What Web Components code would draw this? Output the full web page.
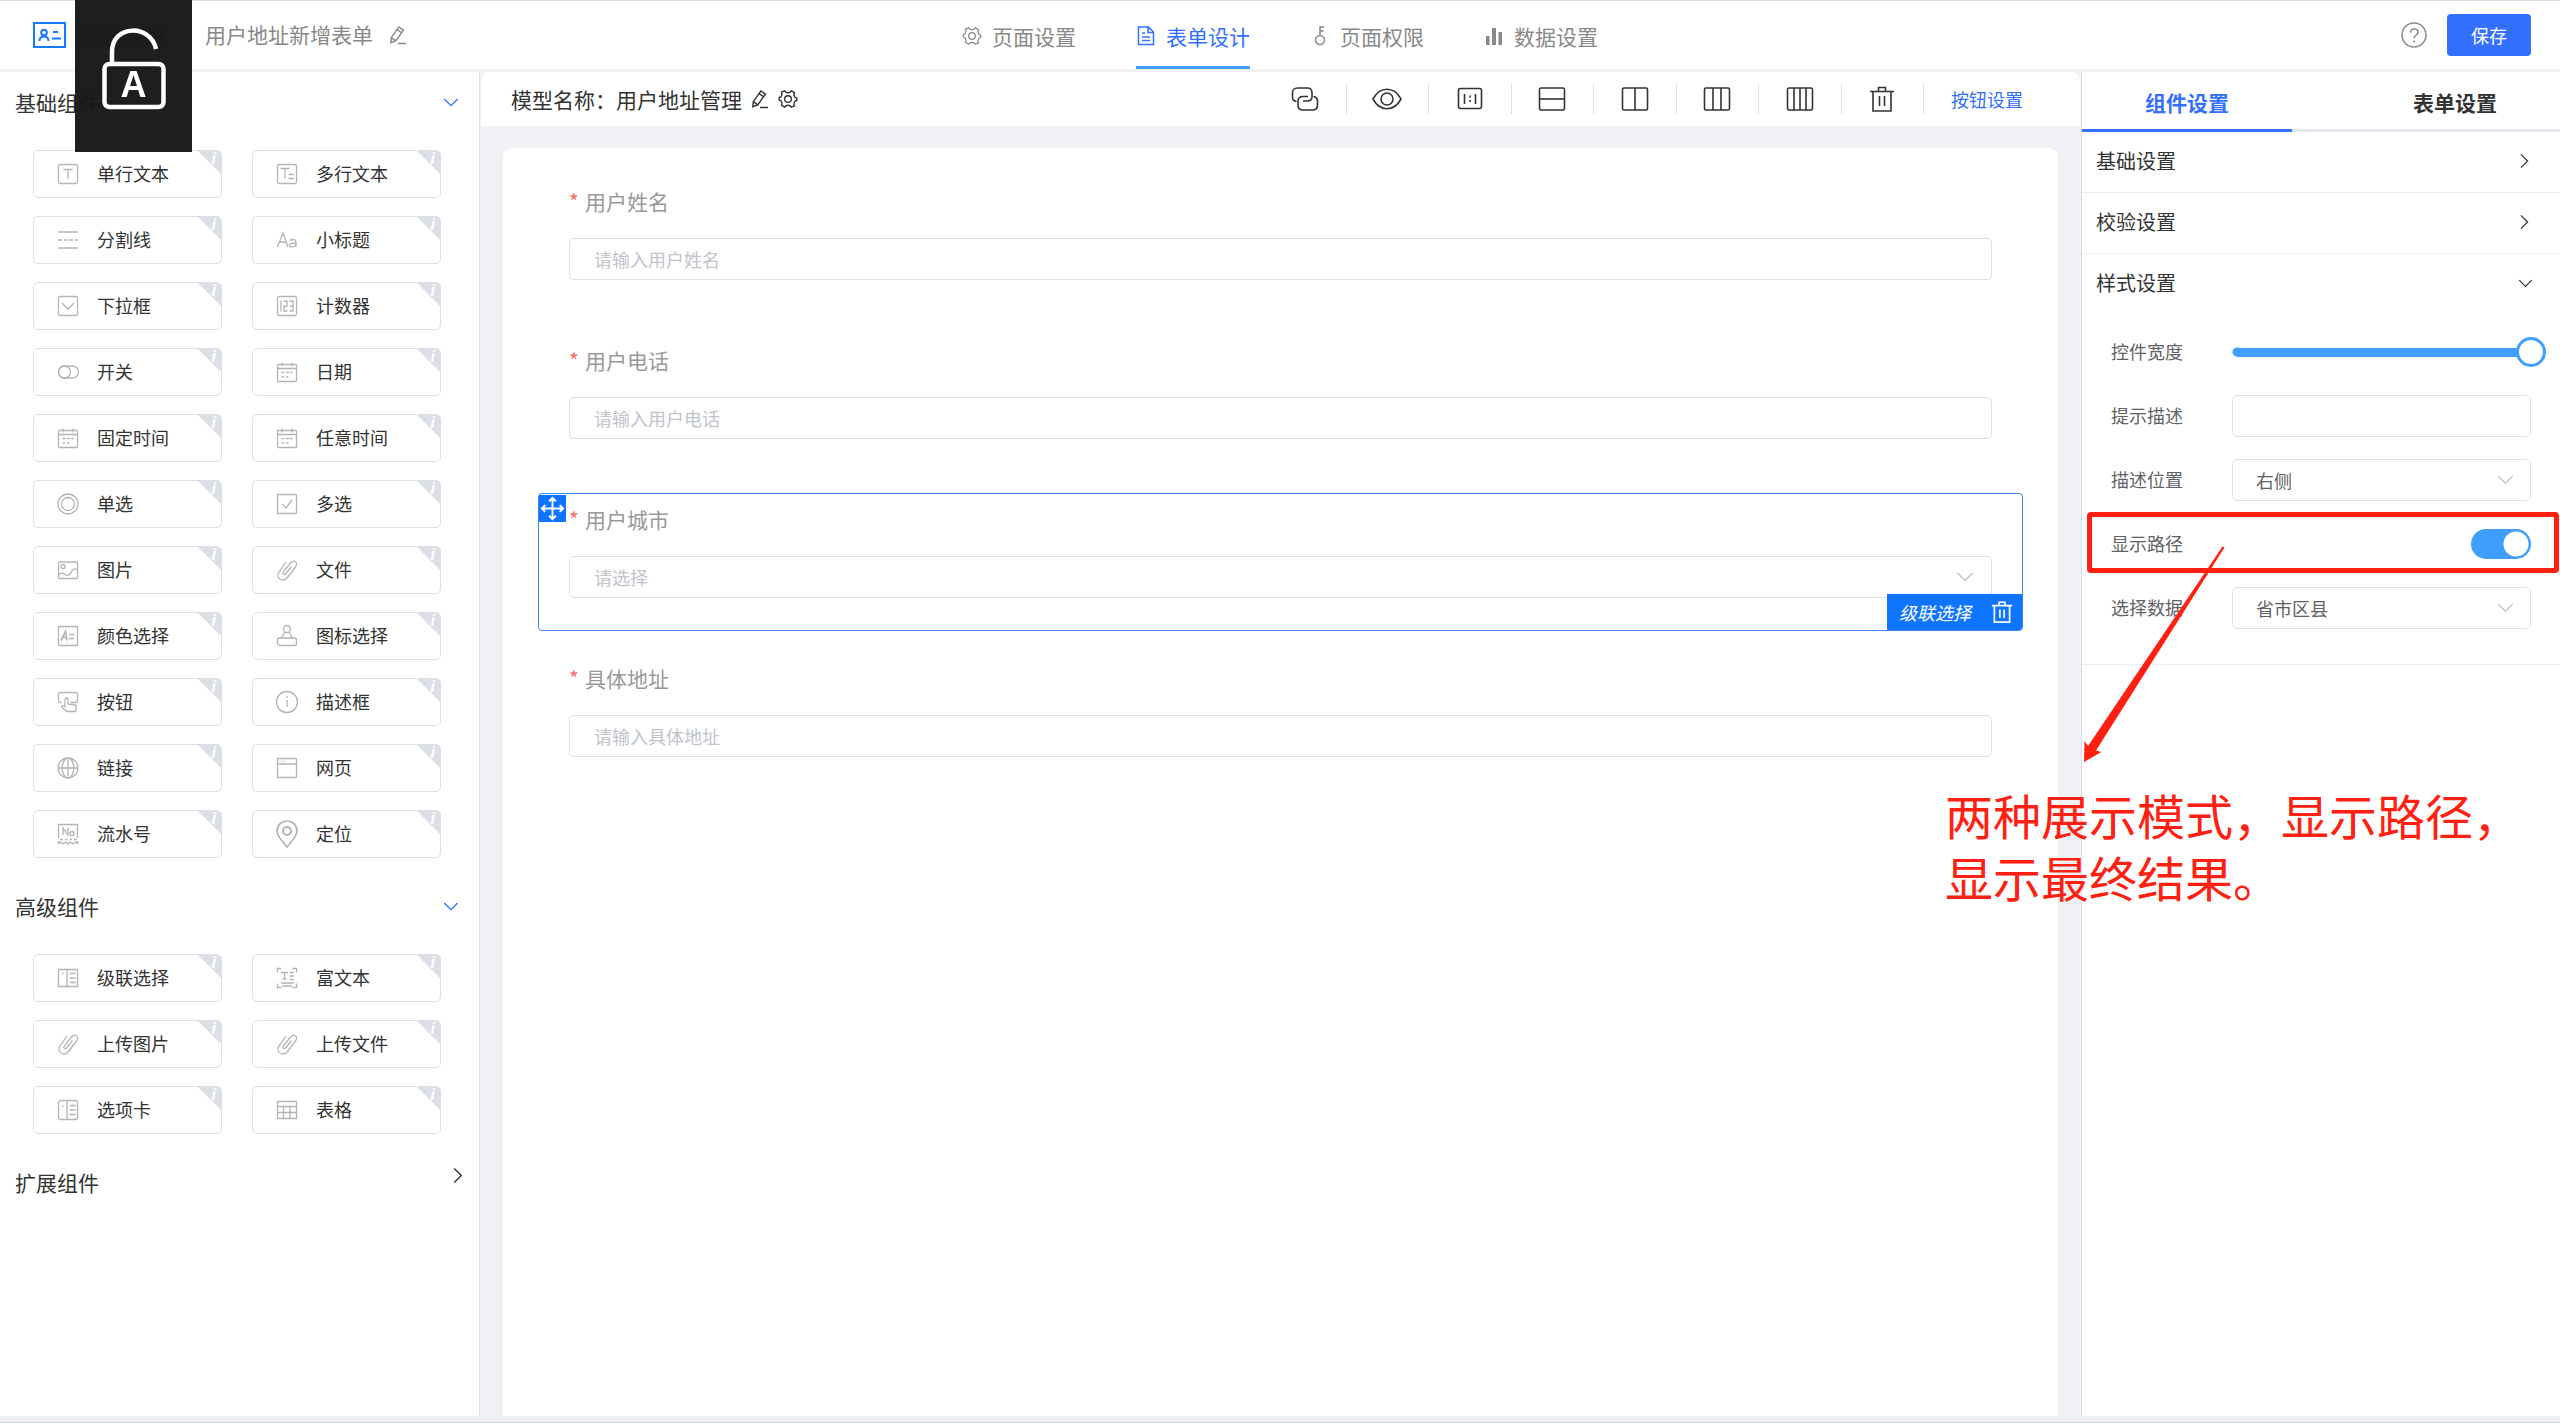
<!DOCTYPE html>
<html lang="zh-CN">
<head>
<meta charset="utf-8">
<title>用户地址新增表单</title>
<style>
html,body{margin:0;height:100%}
body{font-family:"Noto Sans CJK SC","Noto Sans",sans-serif;font-size:18px;color:#333;background:#eff1f4}
</style>
</head>
<body>
<form-designer></form-designer>
<script>
const ICONS = {
  logo:['0 0 33 26','<rect x="1" y="1" width="31" height="24" fill="none" stroke="#1677ff" stroke-width="2"/><g fill="none" stroke="#1677ff" stroke-width="2"><circle cx="11" cy="10.500" r="2.800"/><path d="M6.500 19c0-3 2-4.500 4.500-4.500s4.500 1.500 4.500 4.500M20 10h5M19 16.500h9"/></g>'],
  pencil:['0 0 20 22','<path d="M2 19.500 2.600 14 11 2l5 3.500L7.500 17.500zM9 5l5 3.500M2.600 14l5 3.500M10 20.500h9"/>'],
  gear:['0 0 24 24','<path d="M8 2.200c.8 1.600 2.200 2.300 4 2.300s3.200-.7 4-2.300l3.800 2.200c-.9 1.600-.8 3.200.1 4.700.9 1.400 1.700 1.600 2.600 1.700v3c-.9.100-1.700.3-2.600 1.700-.9 1.500-1 3.100-.1 4.700L16 21.800c-.8-1.600-2.200-2.300-4-2.300s-3.200.7-4 2.300l-3.800-2.200c.9-1.600.8-3.200-.1-4.700-.9-1.400-1.700-1.600-2.600-1.700v-3c.9-.1 1.700-.3 2.600-1.700.9-1.500 1-3.100.1-4.700z"/><circle cx="12" cy="12" r="4"/>'],
  doc:['0 0 18 22','<path d="M1.500 2h10l5 5v12.500h-15zM11 2v5.500h5M5 8h3M5 12h8M5 15.500h8"/>'],
  key:['0 0 18 22','<circle cx="9" cy="15" r="4.500"/><path d="M9 10.500V2h4M9 6h3.500"/>'],
  bars:['0 0 18 20','<path stroke="none" fill="currentColor" d="M1 10h3.500v9H1zM7 2h4v17H7zM13.500 6H17v13h-3.500z"/>'],
  right:['0 0 10 18','<path d="M1 1.500 8.500 9 1 16.500"/>'],
  down:['0 0 18 10','<path d="M1.500 1 9 8.500 16.500 1"/>'],
  help:['0 0 26 26','<circle cx="13" cy="13" r="12"/><path d="M9.500 10.500c0-5 7.500-4.500 7.500-.3 0 2.800-3.800 2.800-3.800 6"/><path d="M13.200 18.500v2"/>'],
  lock:['0 0 64 82','<g stroke="#fff" stroke-width="4.500"><rect x="2.500" y="35" width="59" height="43" rx="5"/><path d="M10 35V23C10-5 49-5 54 20" stroke-linecap="butt"/></g>'],
  link:['0 0 28 26','<path d="M5.500 15.500C2.500 15 1.500 13 1.500 11V7c0-3 2-5 5-5h10c3 0 4.500 2 4.500 5v3.500c0 3.500-2 4.500-5 4.500h-4"/><path d="M22.500 10.500c3 .5 4 2.500 4 4.500v4c0 3-2 5-5 5H12c-3 0-5-2-5-5v-3.500c0-3 2-5 5-5h5"/>'],
  eye:['0 0 30 24','<path d="M1 12C8-1 22-1 29 12 22 25 8 25 1 12z"/><circle cx="15" cy="12" r="6"/>'],
  ratio:['0 0 26 24','<rect x="1.500" y="1.500" width="23" height="20" rx="2"/><path d="M7.500 7v10M18.500 7v10M13 8.500v2M13 13v2"/>'],
  rows:['0 0 28 26','<rect x="1.500" y="2" width="25" height="22" rx="1.500"/><path d="M1.500 13h25"/>'],
  cols2:['0 0 28 26','<rect x="1.500" y="2" width="25" height="22" rx="1.500"/><path d="M14 2v22"/>'],
  cols3:['0 0 28 26','<rect x="1.500" y="2" width="25" height="22" rx="1.500"/><path d="M10 2v22M18 2v22"/>'],
  cols4:['0 0 28 26','<rect x="1.500" y="2" width="25" height="22" rx="1.500"/><path d="M8 2v22M14 2v22M20 2v22"/>'],
  trash:['0 0 26 28','<path d="M1 6.500h24M4 6.500V26h18V6.500M9.500 6V2.500h7V6M10.500 11v10M15.500 11v10"/>'],
  move:['0 0 26 26','<path d="M13 2.500v21M2.500 13h21M9.500 5.500 13 2l3.500 3.500M9.500 20.500 13 24l3.500-3.500M5.500 9.500 2 13l3.500 3.500M20.500 9.500 24 13l-3.500 3.500"/>'],
  text:['0 0 24 24','<rect x="2.500" y="2.500" width="19" height="19" rx="1.500"/><path d="M7.500 7.500h9M12 7.500v9.500"/>'],
  textarea:['0 0 24 24','<rect x="2.500" y="2.500" width="19" height="19" rx="1.500"/><path d="M5.500 6.500h9M10 6.500v10.500M13.500 12.500H19M13.500 16.500H19"/>'],
  divider:['0 0 24 24','<path d="M2 4h20M2 20h20M2 12h4M8 12h3.500M13.500 12H17M19 12h3"/>'],
  heading:['0 0 24 24','<path d="M2.500 19 8 5l5 14M4.500 14h7"/><path d="M15 12.500c1.500-1.500 6-1.500 6 1.500v5M21 15c-4 0-6.500.5-6.500 2.200 0 2.500 5 2.300 6.500-.5"/>'],
  select:['0 0 24 24','<rect x="2.500" y="2.500" width="19" height="19" rx="1.500"/><path d="M6 9l6 6 6-6"/>'],
  counter:['0 0 24 24','<rect x="2.500" y="2.500" width="19" height="19" rx="1.500"/><path d="M6 6.500v11M8.500 7H12v5H9v5h3.500M14.500 7H18v10h-3.500M14.500 12H18"/>'],
  toggle:['0 0 24 24','<rect x="2.500" y="6" width="20" height="12" rx="6"/><circle cx="8.500" cy="12" r="6"/>'],
  date:['0 0 24 24','<rect x="2.500" y="4.500" width="19" height="17" rx="1"/><path d="M2.500 8.500h19M7 2.500v4M17 2.500v4M6.500 12.500h3M11 12.500h3M15 12.500h2.500M6.500 17h2.500M11 17h2.500"/>'],
  radio:['0 0 24 24','<circle cx="12" cy="12" r="10"/><circle cx="12" cy="12" r="6.500"/>'],
  check:['0 0 24 24','<rect x="2.500" y="2.500" width="19" height="19" rx="1"/><path d="M7 12l4 4 6-8"/>'],
  image:['0 0 24 24','<rect x="2.500" y="4" width="19" height="16.500" rx="1"/><circle cx="7" cy="8.500" r="2"/><path d="M2.500 17c3-4 5-1 7.500 0s4 0 5.500-3.500 3-3 6-2"/>'],
  clip:['0 0 24 24','<path d="M16.500 8.500 10.500 16c-1.500 1.500-3.500 0-2.300-1.800L15 5.500c1.500-2 3-2.800 5-2 2 1 2 3.500.5 5.500l-8 10.500c-2 2.500-5 3-7.500 1.500-2.500-2-2.500-5-1-7L11 4"/>'],
  color:['0 0 24 24','<rect x="2.500" y="2.500" width="19" height="19" rx="1"/><path d="M5 16.500 9.500 7.500 11 16.500M6.500 13.500h4M13.500 10.500h5M13 14.500h5" stroke-width="1.700"/>'],
  stamp:['0 0 24 24','<circle cx="12" cy="5" r="3.500"/><path d="M10 8 6.500 14M14 8l3.500 6"/><rect x="2.500" y="14" width="19" height="7.500" rx="2"/>'],
  press:['0 0 24 24','<path d="M5.500 12.500h-1c-1.500 0-2-.5-2-2v-6c0-1.500.5-2 2-2h15c1.500 0 2 .5 2 2v6c0 1.500-.5 2-2 2h-5"/><path d="M9 15V9.500c0-2 3-2 3 0V14l7 1c1.500.3 1.500 1 1.300 2l-.8 4.500H11L5.500 17c0-1.500 2-2 3.500-.5z"/>'],
  info:['0 0 24 24','<circle cx="12" cy="12" r="10.500"/><path d="M12 10v7M12 6v2"/>'],
  globe:['0 0 24 24','<circle cx="12" cy="12" r="10"/><path d="M2 12h20M12 2v20M10 2c-5 6-5 14 0 20M14 2c5 6 5 14 0 20"/>'],
  page:['0 0 24 24','<rect x="2.500" y="2.500" width="19" height="19" rx="1"/><path d="M2.500 8h19"/><path d="M4.500 5.200h1M7 5.200h1M9.500 5.200h1" stroke-width="1"/>'],
  serial:['0 0 24 24','<path d="M2.500 16V2.500h19V16M2.500 19v2.500l2-1.500 2.500 2 2.500-2 2.500 2 2.500-2 2.500 2 2.500-2 2 1.500V19M4 17.500h3M9 17.500h2.500M13.500 17.500h2.500M18 17.500h3M7 13V6l5 7V6"/><circle cx="16" cy="11.500" r="2"/>'],
  pin:['0 0 24 28','<path d="M12 27C7 20.500 2 16.500 2 11a10 10 0 0 1 20 0c0 5.500-5 9.500-10 16z" stroke-width="1.700"/><circle cx="12" cy="11" r="4" stroke-width="2"/>'],
  cascade:['0 0 24 24','<path d="M2.500 3.500h19v17h-19zM11 3.500v17M13.500 7.500h6M13.500 12h6M13.500 16.500h6M6 7.500h1.500"/>'],
  rich:['0 0 24 24','<path d="M2.500 6.500v-4h4M17.500 2.500h4v4M21.500 17.500v4h-4M6.500 21.500h-4v-4M6 6.500h7M9.500 6.500v6.500M7.500 13h4M14.500 6.500h4.500M14.500 10H19M14.500 13.500H19M6 17h13M7 20h10"/>'],
  tabs:['0 0 24 24','<rect x="2.500" y="2.500" width="19" height="19" rx="2.500"/><path d="M11 2.500v19M13.500 7.500h6M13.500 12h6M13.500 16.500h6M6 8h1.500"/>'],
  table:['0 0 24 24','<path d="M2.500 3.500h19v17h-19zM2.500 8.500h19M2.500 14.500h19M8.500 8.500v12M15 8.500v12"/>']
};

class Base extends HTMLElement {
  constructor(){ super(); this.attachShadow({mode:'open'}); }
  connectedCallback(){
    this.shadowRoot.innerHTML = '<style>*{box-sizing:border-box}button,input,select{font:inherit;color:inherit;margin:0}button{background:none;border:0;padding:0;cursor:pointer}a{color:inherit;text-decoration:none}'
      + this.css() + '</style>' + this.html();
  }
  a(n){ return this.getAttribute(n) || ''; }
}

/* <ui-icon name w h line> : stroke icon that takes the text colour */
customElements.define('ui-icon', class extends Base {
  css(){ return `:host{display:block;flex:none;width:${this.a('w')}px;height:${this.a('h')}px}
    svg{display:block;width:100%;height:100%;fill:none;stroke:currentColor;stroke-width:${this.a('line')||'1.5'};overflow:visible}`; }
  html(){ const [box,body] = ICONS[this.a('name')]; return `<svg viewBox="${box}" aria-hidden="true">${body}</svg>`; }
});

customElements.define('header-tab', class extends Base {
  css(){ return `:host{display:block}
    a{display:flex;align-items:center;gap:10px;height:68px;padding-top:2px;font-size:21px;line-height:28px;color:#888}
    :host([active]) a{color:#3370ff;box-shadow:inset 0 -3px #409eff}
    span{display:flex;justify-content:center;width:20px}`; }
  html(){ const s={gear:[20,20],doc:[18,22],key:[18,22],bars:[18,20]}[this.a('icon')];
    return `<a href="#"><span><ui-icon name="${this.a('icon')}" w="${s[0]}" h="${s[1]}"></ui-icon></span><slot></slot></a>`; }
});

customElements.define('app-header', class extends Base {
  css(){ return `:host{display:grid;grid-template-columns:1fr auto 1fr;height:72px;border-top:1px solid #dcdcdc;border-bottom:3px solid #f0f1f5;background:#fff;box-sizing:border-box}
    nav{display:flex;gap:60px}
    .crumbs,.actions{display:flex;align-items:center;gap:16px;font-size:21px;line-height:28px;color:#888}
    .crumbs{padding-left:33px}
    .crumbs a,.crumbs span{padding-bottom:2px}
    .actions{justify-content:flex-end;gap:20px;padding-right:29px}
    .save{width:84px;height:42px;border-radius:4px;background:#3370ff;color:#fff;font-size:18px}`; }
  html(){ return `<div class="crumbs"><ui-icon name="logo" w="33" h="26"></ui-icon><a href="#">演示应用</a><ui-icon name="right" w="7" h="14"></ui-icon><span>用户地址新增表单</span><button aria-label="重命名"><ui-icon name="pencil" w="18" h="20" line="1.600"></ui-icon></button></div>
    <nav><header-tab icon="gear">页面设置</header-tab><header-tab icon="doc" active>表单设计</header-tab><header-tab icon="key">页面权限</header-tab><header-tab icon="bars">数据设置</header-tab></nav>
    <div class="actions"><button aria-label="帮助"><ui-icon name="help" w="26" h="26"></ui-icon></button><button class="save">保存</button></div>`; }
});

customElements.define('component-card', class extends Base {
  css(){ return `:host{display:block}
    button{position:relative;display:flex;align-items:center;gap:17px;width:100%;height:48px;padding-left:22px;border:1px solid #dcdfe6;border-radius:5px;background:#fff;font-size:18px;line-height:24px;color:#333;overflow:hidden}
    span{padding-bottom:2px}
    ui-icon{color:#b4b4b4}
    i{position:absolute;top:-1px;right:-1px;width:25px;height:25px;padding:1px 6px 0 0;background:#dcdfe6;clip-path:polygon(0 0,100% 0,100% 100%);color:#fff;font:italic bold 16px/16px "Liberation Sans",sans-serif;text-align:right}`; }
  html(){ return `<button><ui-icon name="${this.a('icon')}" w="24" h="${this.a('icon')==='pin'?28:24}" line="1.300"></ui-icon><span><slot></slot></span><i>i</i></button>`; }
});

customElements.define('component-group', class extends Base {
  css(){ return `:host{display:block}
    h2{display:flex;align-items:center;justify-content:space-between;height:60px;margin:0;padding:0 20px 0 15px;font-size:21px;line-height:28px;font-weight:400;color:#333}
    :host([open]) h2 ui-icon{color:#3370ff}
    :host(:not([open])) h2{padding-right:16px}
    :host(:not([open])) ui-icon{margin-bottom:14px}
    div{display:grid;grid-template-columns:1fr 1fr;gap:18px 30px;padding:18px 38px 18px 33px}`; }
  html(){ const o=this.hasAttribute('open');
    return `<h2>${this.a('label')}<ui-icon name="${o?'down':'right'}" w="${o?16:10}" h="${o?9:17}"></ui-icon></h2>${o?'<div><slot></slot></div>':''}`; }
});

const BASIC=[['text','单行文本'],['textarea','多行文本'],['divider','分割线'],['heading','小标题'],['select','下拉框'],['counter','计数器'],['toggle','开关'],['date','日期'],['date','固定时间'],['date','任意时间'],['radio','单选'],['check','多选'],['image','图片'],['clip','文件'],['color','颜色选择'],['stamp','图标选择'],['press','按钮'],['info','描述框'],['globe','链接'],['page','网页'],['serial','流水号'],['pin','定位']];
const ADVANCED=[['cascade','级联选择'],['rich','富文本'],['clip','上传图片'],['clip','上传文件'],['tabs','选项卡'],['table','表格']];
const cards = list => list.map(([i,t])=>`<component-card icon="${i}">${t}</component-card>`).join('');

customElements.define('component-palette', class extends Base {
  css(){ return `:host{display:block;background:#fff;border-right:1px solid #dcdfe6;overflow:hidden}`; }
  html(){ return `<component-group label="基础组件" open>${cards(BASIC)}</component-group><component-group label="高级组件" open>${cards(ADVANCED)}</component-group><component-group label="扩展组件"></component-group>`; }
});

customElements.define('canvas-toolbar', class extends Base {
  css(){ return `:host{display:flex;align-items:center;height:54px;margin:0 1px;padding:0 57px 0 30px;border-radius:8px 8px 0 0;background:#fff;font-size:21px;line-height:28px}
    .name{display:flex;align-items:center;gap:9px;margin-right:auto;color:#333}
    .tools{display:flex;width:660px;margin-right:27px}
    .tools button{flex:1;display:flex;align-items:center;justify-content:center;height:30px;border-right:1px solid #dcdfe6;color:#333}
    .link{font-size:18px;color:#3370ff}`; }
  html(){ const t=[['link',28,26,'关联'],['eye',30,24,'预览'],['ratio',26,24,'比例'],['rows',28,26,'单列'],['cols2',28,26,'两列'],['cols3',28,26,'三列'],['cols4',28,26,'四列'],['trash',26,28,'清空']];
    return `<div class="name"><span>模型名称：用户地址管理</span><button aria-label="编辑"><ui-icon name="pencil" w="18" h="20" line="1.600"></ui-icon></button><button aria-label="设置"><ui-icon name="gear" w="20" h="20" line="1.700"></ui-icon></button></div>
    <div class="tools">${t.map(([n,w,h,l])=>`<button aria-label="${l}"><ui-icon name="${n}" w="${w}" h="${h}" line="1.600"></ui-icon></button>`).join('')}</div><button class="link">按钮设置</button>`; }
});

customElements.define('form-field', class extends Base {
  css(){ return `:host{display:block;position:relative;height:138px;padding:10px 30px;border:1px solid transparent;border-radius:4px;box-sizing:border-box}
    :host([selected]){border-color:#3a86ea}
    label{display:flex;gap:8px;margin-bottom:22px;font-size:21px;line-height:30px;color:#999}
    label b{width:8px;font-weight:400;color:#f56c6c}
    .box{position:relative}
    input,select{display:block;width:100%;height:42px;padding:0 24px;border:1px solid #dcdfe6;border-radius:5px;background:#fff;outline:0;font-size:18px;color:#c0c4cc;appearance:none}
    input::placeholder{color:#c0c4cc;opacity:1}
    .box ui-icon{position:absolute;right:18px;top:16px;color:#c0c4cc;pointer-events:none}
    .drag{position:absolute;left:0;top:1px;width:27px;height:27px;display:grid;place-items:center;background:#0f75ff;color:#fff}
    .bar{position:absolute;right:0;bottom:0;display:flex;align-items:center;gap:20px;height:36px;padding:0 9px 0 12px;border-radius:0 0 3px 0;background:#0f75ff;color:#fff;font-size:18px;font-style:italic;line-height:24px}`; }
  html(){ const sel=this.hasAttribute('selected');
    return `<label for="c"><b>*</b>${this.a('label')}</label><div class="box">${sel?`<select id="c"><option>${this.a('hint')}</option></select><ui-icon name="down" w="18" h="10"></ui-icon>`:`<input id="c" placeholder="${this.a('hint')}">`}</div>`
    +(sel?`<button class="drag" aria-label="移动"><ui-icon name="move" w="25" h="25" line="2"></ui-icon></button><div class="bar"><span>级联选择</span><button aria-label="删除"><ui-icon name="trash" w="22" h="24" line="2"></ui-icon></button></div>`:''); }
});

customElements.define('form-canvas', class extends Base {
  css(){ return `:host{display:flex;flex-direction:column;gap:21px;flex:1;margin:22px 23px 0;padding:27px 35px;border-radius:9px 9px 0 0;background:#fff;box-sizing:border-box}`; }
  html(){ return `<form-field label="用户姓名" hint="请输入用户姓名"></form-field><form-field label="用户电话" hint="请输入用户电话"></form-field><form-field label="用户城市" hint="请选择" selected></form-field><form-field label="具体地址" hint="请输入具体地址"></form-field>`; }
});

customElements.define('settings-section', class extends Base {
  css(){ return `:host{display:block;border-bottom:1px solid #ebeef5}
    h3{display:flex;align-items:center;justify-content:space-between;height:60px;margin:0;padding:0 31px 2px 14px;font-size:20px;line-height:28px;font-weight:400;color:#333}
    :host([open]) h3{padding-right:27px}
    div{display:flex;flex-direction:column;gap:22px;padding:17px 29px 35px}`; }
  html(){ const o=this.hasAttribute('open');
    return `<h3>${this.a('label')}<ui-icon name="${o?'down':'right'}" w="${o?15:9}" h="${o?9:16}" line="1.400"></ui-icon></h3>${o?'<div><slot></slot></div>':''}`; }
});

customElements.define('setting-row', class extends Base {
  css(){ return `:host{display:grid;grid-template-columns:121px 1fr;align-items:center;height:42px;font-size:18px;line-height:24px;color:#606266}
    label{padding-bottom:3px}
    .box{position:relative;display:flex;justify-content:flex-end}
    .text,select{width:100%;height:42px;padding:0 23px;border:1px solid #dcdfe6;border-radius:5px;background:#fff;outline:0;appearance:none}
    .box ui-icon{position:absolute;right:17px;top:16px;color:#c0c4cc;pointer-events:none}
    [type=range]{appearance:none;flex:1;height:30px;margin-right:-15px;background:linear-gradient(#409eff,#409eff) 5px 50%/calc(100% - 20px) 9px no-repeat,radial-gradient(circle at 5px 15px,#409eff 4px,transparent 5px);outline:0}
    [type=range]::-webkit-slider-thumb{appearance:none;width:30px;height:30px;border:3px solid #409eff;border-radius:50%;background:#fff}
    [type=checkbox]{appearance:none;width:60px;height:30px;border-radius:15px;background:radial-gradient(circle at 45px 15px,#fff 12px,transparent 13px) #409eff}`; }
  html(){ const v=this.a('value'), c={
      range:'<input id="c" type="range" value="100">',
      text:'<input id="c" class="text">',
      select:`<select id="c"><option>${v}</option></select><ui-icon name="down" w="17" h="10"></ui-icon>`,
      toggle:'<input id="c" type="checkbox" checked>'}[this.a('type')];
    return `<label for="c">${this.a('label')}</label><div class="box">${c}</div>`; }
});

/* Red call-out laid over the panel: frame, arrow and note */
customElements.define('callout-note', class extends Base {
  css(){ return `:host{position:absolute;left:0;top:0;width:100%;height:0;pointer-events:none;color:#ff2012}
    .frame{position:absolute;left:5px;right:1px;top:440px;height:61px;border:5px solid;border-radius:4px}
    svg{position:absolute;left:0;top:470px;width:150px;height:225px}
    p{position:absolute;left:-137px;top:716px;margin:0;font-family:"Liberation Sans","Noto Sans CJK SC",sans-serif;font-size:48px;line-height:62px;white-space:nowrap}`; }
  html(){ return `<div class="frame"></div><svg viewBox="0 0 150 225"><path fill="currentColor" d="M140.500 4.500 142.500 5.500 14 208.500 19.500 210 2 220 2.500 199 6 204z"/></svg><p>两种展示模式，显示路径，<br>显示最终结果。</p>`; }
});

customElements.define('settings-panel', class extends Base {
  css(){ return `:host{display:block;position:relative;border-left:1px solid #dcdfe6;background:#fff}
    nav{display:flex;justify-content:space-between;height:60px;box-shadow:inset 0 -3px #e4e7ed}
    nav a{display:grid;place-items:center;width:210px;font-size:21px;line-height:28px;font-weight:700;color:#333}
    nav a.on{color:#3370ff;box-shadow:inset 0 -3px #3370ff}`; }
  html(){ return `<nav><a class="on" href="#">组件设置</a><a href="#">表单设置</a></nav>
    <settings-section label="基础设置"></settings-section><settings-section label="校验设置"></settings-section>
    <settings-section label="样式设置" open>
      <setting-row label="控件宽度" type="range"></setting-row>
      <setting-row label="提示描述" type="text"></setting-row>
      <setting-row label="描述位置" type="select" value="右侧"></setting-row>
      <setting-row label="显示路径" type="toggle"></setting-row>
      <setting-row label="选择数据" type="select" value="省市区县"></setting-row>
    </settings-section><callout-note></callout-note>`; }
});

/* Caps-lock indicator floating over the top-left corner */
customElements.define('caps-indicator', class extends Base {
  css(){ return `:host{position:fixed;left:75px;top:0;width:117px;height:152px;background:rgba(23,23,23,.97);color:#fff}
    ui-icon{position:absolute;left:27px;top:29px}
    b{position:absolute;left:0;right:0;top:65px;text-align:center;font:bold 36px/40px "Liberation Sans",sans-serif}`; }
  html(){ return `<ui-icon name="lock" w="64" h="82"></ui-icon><b>A</b>`; }
});

customElements.define('form-designer', class extends Base {
  css(){ return `:host{display:flex;flex-direction:column;min-height:100vh;padding-bottom:6px;border-bottom:1px solid #c3d6dc;box-sizing:border-box}
    .body{flex:1;display:grid;grid-template-columns:480px 1fr 479px;background:#f0f1f5}
    main{display:flex;flex-direction:column;min-width:0}`; }
  html(){ return `<app-header></app-header><div class="body"><component-palette></component-palette><main><canvas-toolbar></canvas-toolbar><form-canvas></form-canvas></main><settings-panel></settings-panel></div><caps-indicator></caps-indicator>`; }
});
</script>
</body>
</html>
